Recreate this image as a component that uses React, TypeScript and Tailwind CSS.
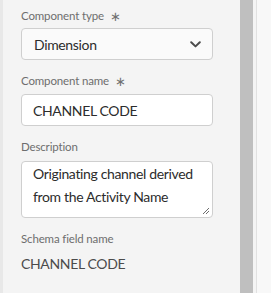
const font = { fontFamily: 'Lato, "Noto Sans", sans-serif' };

const Label = ({ text, required }: { text: string; required?: boolean }) => (
  <div className="flex h-[16px] items-center gap-[6px] text-[11.5px] leading-[16px] tracking-[-0.15px] text-[#6e6e6e]">
    <span>{text}</span>
    {required && <span className="text-[13px] text-[#707070]">∗</span>}
  </div>
);

export default function App() {
  return (
    <div className="flex h-[293px] w-[271px] overflow-hidden bg-[#f8f8f8]" style={font}>
      {/* panel */}
      <div className="flex w-[240px] shrink-0 border-l-[3px] border-[#e8e8e8] bg-[#f4f4f4]">
        <div className="flex w-full flex-col pl-[18px] pt-[8px] tracking-[-0.35px]">
          <Label text="Component type" required />
          <div className="mt-[4px] flex h-[32px] w-[192px] items-center justify-between rounded-[4px] border border-[#cfcfcf] bg-[#fafafa] pl-[12px] pr-[11px]">
            <span className="text-[14px] text-[#2c2c2c]">Dimension</span>
            <svg width="11" height="7" viewBox="0 0 11 7">
              <path d="M1.2 1.2 L5.5 5.4 L9.8 1.2" stroke="#4b4b4b" strokeWidth="2" fill="none" strokeLinecap="round" strokeLinejoin="round" />
            </svg>
          </div>

          <div className="mt-[13px]">
            <Label text="Component name" required />
          </div>
          <div className="mt-[5px] flex h-[32px] w-[192px] items-center rounded-[4px] border border-[#cfcfcf] bg-white pl-[11px]">
            <span className="text-[14px] text-[#2c2c2c]">CHANNEL CODE</span>
          </div>

          <div className="mt-[13px]">
            <Label text="Description" />
          </div>
          <div className="relative mt-[6px] h-[57px] w-[192px] rounded-[4px] border border-[#cfcfcf] bg-white pl-[11px] text-[14px] leading-[23px] text-[#2c2c2c]">
            Originating channel derived
            <br />
            from the Activity Name
            <svg className="absolute bottom-[2px] right-[2px]" width="8" height="8" viewBox="0 0 8 8">
              <path d="M7 1 L1 7 M7 4 L4 7" stroke="#6e6e6e" strokeWidth="1" fill="none" />
            </svg>
          </div>

          <div className="mt-[13px]">
            <Label text="Schema field name" />
          </div>
          <div className="mt-[8px] text-[14px] leading-[18px] text-[#4b4b4b]">CHANNEL CODE</div>
        </div>
      </div>
      {/* scrollbar */}
      <div className="w-[13px] shrink-0 bg-[#bfbfbf]" />
      <div className="w-[3px] shrink-0 bg-[#f4f4f4]" />
      <div className="w-px shrink-0 bg-[#e1e1e1]" />
      <div className="flex-1 bg-[#f8f8f8]" />
    </div>
  );
}
